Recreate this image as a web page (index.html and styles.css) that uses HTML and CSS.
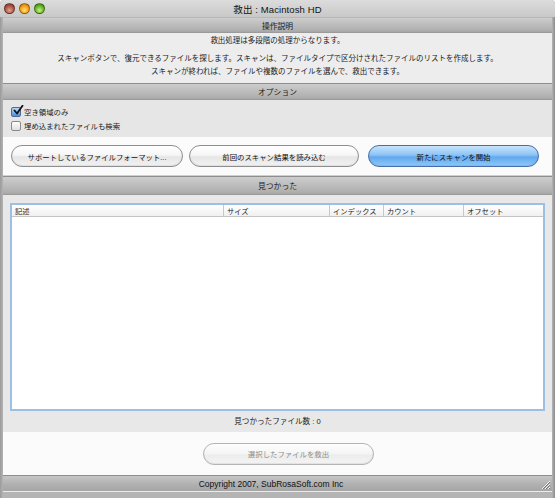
FILE: index.html
```html
<!DOCTYPE html>
<html lang="ja">
<head>
<meta charset="utf-8">
<title>救出 : Macintosh HD</title>
<link rel="stylesheet" href="styles.css">
</head>
<body>
<div class="window">
  <div class="titlebar">
    <div class="lights">
      <span class="light red"></span>
      <span class="light yellow"></span>
      <span class="light green"></span>
    </div>
    <div class="title">救出 : Macintosh HD</div>
  </div>
  <div class="content">
    <div class="band band-first">操作説明</div>
    <div class="desc">
      <p class="p1">救出処理は多段階の処理からなります。</p>
      <p class="p2">スキャンボタンで、復元できるファイルを探します。スキャンは、ファイルタイプで区分けされたファイルのリストを作成します。<br>スキャンが終われば、ファイルや複数のファイルを選んで、救出できます。</p>
    </div>
    <div class="band">オプション</div>
    <div class="options">
      <label class="check"><span class="box checked"><svg viewBox="0 0 12 12" width="12" height="12"><path d="M2.5 5.5 L5 8.5 L10.5 0.8" fill="none" stroke="#111" stroke-width="1.8" stroke-linecap="round" stroke-linejoin="round"/></svg></span>空き領域のみ</label>
      <label class="check"><span class="box"></span>埋め込まれたファイルも検索</label>
    </div>
    <div class="buttons">
      <div class="btn">サポートしているファイルフォーマット...</div>
      <div class="btn">前回のスキャン結果を読み込む</div>
      <div class="btn primary">新たにスキャンを開始</div>
    </div>
    <div class="band band-found">見つかった</div>
    <div class="found">
      <div class="table">
        <div class="thead">
          <div class="th c1">記述</div>
          <div class="th c2">サイズ</div>
          <div class="th c3">インデックス</div>
          <div class="th c4">カウント</div>
          <div class="th c5">オフセット</div>
        </div>
        <div class="tbody"></div>
      </div>
      <div class="count">見つかったファイル数 : 0</div>
    </div>
    <div class="action">
      <div class="btn disabled">選択したファイルを救出</div>
    </div>
    <div class="footer">
      <span>Copyright 2007, SubRosaSoft.com Inc</span>
      <svg class="grip" viewBox="0 0 12 12" width="12" height="12"><path d="M11 3 L3 11 M11 6 L6 11 M11 9 L9 11" stroke="#f4f4f4" stroke-width="1"/><path d="M11 4 L4 11 M11 7 L7 11 M11 10 L10 11" stroke="#777" stroke-width="1"/></svg>
    </div>
  </div>
</div>
</body>
</html>
```
FILE: styles.css
```css
* { box-sizing: border-box; }
html, body { margin: 0; padding: 0; background: #fff; }
body {
  font-family: "Liberation Sans", "Noto Sans CJK JP", sans-serif;
  color: #1a1a1a;
}
.window {
  width: 555px;
  height: 498px;
  background: linear-gradient(to right, #9a9a9a, #b4b4b4 3px, #b4b4b4 552px, #8a8a8a);
  border-radius: 4px 4px 0 0;
  display: flex;
  flex-direction: column;
  padding-bottom: 6px;
  overflow: hidden;
}
.titlebar {
  height: 17px;
  flex: none;
  position: relative;
  background: linear-gradient(#dcdcdc, #c8c8c8);
  display: flex;
  align-items: center;
  justify-content: center;
}
.lights {
  position: absolute;
  left: 4px;
  top: 3px;
  display: flex;
  gap: 4px;
}
.light {
  width: 11px;
  height: 11px;
  border-radius: 50%;
  border: 1px solid rgba(0,0,0,0.35);
}
.red { background: radial-gradient(circle at 50% 70%, #e8a090, #a8503e 60%, #7a3528); }
.yellow { background: radial-gradient(circle at 50% 70%, #ffe070, #f09a10 60%, #b86808); }
.green { background: radial-gradient(circle at 50% 70%, #c8f080, #5cb020 60%, #3a7a10); }
.title {
  font-size: 9.5px;
  color: #111;
  letter-spacing: 0.1px;
}
.content {
  flex: 1;
  margin: 0 3px;
  display: flex;
  flex-direction: column;
  background: #ebebeb;
}
.band {
  height: 17px;
  flex: none;
  background: linear-gradient(#cdcdcd, #b0b0b0 85%, #a6a6a6);
  border-top: 1px solid #8e8e8e;
  border-bottom: 1px solid #9a9a9a;
  font-size: 7.8px;
  display: flex;
  align-items: center;
  justify-content: center;
  color: #1a1a1a;
}
.band-first { height: 16px; border-top: 1px solid #b8b8b8; }
.desc {
  height: 50px;
  flex: none;
  background: #ededed;
  text-align: center;
  font-size: 7.5px;
  line-height: 13px;
  padding-top: 1px;
}
.desc p { margin: 0; }
.p2 { margin-top: 5px !important; }
.options {
  height: 37px;
  flex: none;
  background: #e6e6e6;
  display: flex;
  flex-direction: column;
  padding: 6px 0 0 8px;
  gap: 3px;
}
.check {
  display: flex;
  align-items: center;
  gap: 3px;
  font-size: 7.4px;
  height: 11px;
}
.box {
  width: 10px;
  height: 10px;
  border: 1px solid #8a8a8a;
  border-radius: 2px;
  background: linear-gradient(#fdfdfd, #e0e0e0);
  position: relative;
  flex: none;
}
.box.checked {
  background: linear-gradient(#bcd8f6, #4a8fdc);
  border-color: #4a6a98;
}
.box svg { position: absolute; left: 0; top: -3px; }
.buttons {
  height: 39px;
  flex: none;
  background: #fbfbfb;
  display: flex;
  align-items: center;
  padding: 0 11px 0 8px;
  gap: 7px;
  border-bottom: 1px solid #d0d0d0;
}
.btn {
  height: 22px;
  border: 1px solid #8e8e8e;
  border-radius: 11px;
  background: linear-gradient(#ffffff, #f6f6f6 45%, #e6e6e6 55%, #f2f2f2);
  box-shadow: inset 0 -1px 1px rgba(0,0,0,0.08);
  font-size: 7.4px;
  display: flex;
  align-items: center;
  justify-content: center;
  color: #111;
}
.buttons .btn:nth-child(1) { width: 172px; }
.buttons .btn:nth-child(2) { width: 170px; margin-left: -1px; }
.buttons .btn:nth-child(3) { width: 171px; margin-left: 2px; }
.btn.primary {
  border-color: #4a6ca8;
  background: linear-gradient(#c9e3fb, #8cc4f6 45%, #62a8ef 55%, #8dcafa);
}
.band-found { height: 19px; }
.found {
  height: 237px;
  flex: none;
  background: #e8e8e8;
  padding: 8px 7px 0 7px;
  display: flex;
  flex-direction: column;
}
.table {
  height: 208px;
  border: 2px solid #9cc0e4;
  background: #fff;
  display: flex;
  flex-direction: column;
}
.thead {
  height: 12px;
  display: flex;
  background: linear-gradient(#ffffff, #f0f0f0);
  border-bottom: 1px solid #c4c4c4;
  font-size: 7.3px;
}
.th {
  padding-left: 3px;
  display: flex;
  align-items: center;
  border-right: 1px solid #c8c8c8;
}
.c1 { width: 212px; }
.c2 { width: 106px; }
.c3 { width: 54px; }
.c4 { width: 80px; }
.c5 { flex: 1; border-right: none; }
.count {
  text-align: center;
  font-size: 7.6px;
  margin-top: 4px;
  height: 13px;
  line-height: 13px;
}
.action {
  height: 43px;
  flex: none;
  background: #fbfbfb;
  display: flex;
  align-items: center;
  justify-content: center;
  padding-left: 22px;
}
.btn.disabled {
  width: 171px;
  color: #8c8c8c;
  border-color: #b4b4b4;
  background: linear-gradient(#fefefe, #f4f4f4 50%, #ececec 55%, #f4f4f4);
}
.footer {
  height: 16px;
  flex: none;
  position: relative;
  background: linear-gradient(#c6c6c6, #afafaf 60%, #a6a6a6);
  border-top: 1px solid #8e8e8e;
  font-size: 8.5px;
  display: flex;
  align-items: center;
  justify-content: center;
  padding-right: 13px;
  color: #111;
}
.grip { position: absolute; right: 1px; bottom: 1px; }
```
